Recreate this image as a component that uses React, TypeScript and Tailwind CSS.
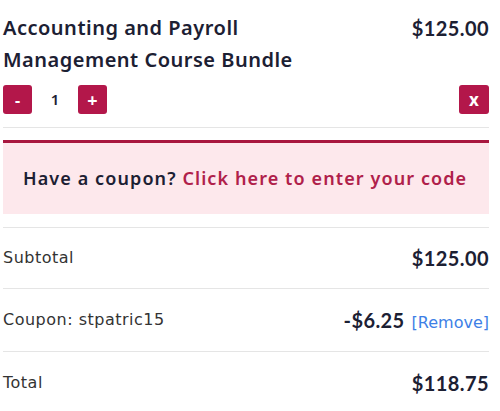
export default function App() {
  return (
    <div className="w-[500px] h-[411px] overflow-hidden bg-white font-['Noto_Sans',sans-serif] text-[#1c2033]">
      <div className="ml-[3px] w-[486px]">
        <div className="pt-[12px] pb-[13px] border-b border-[#e5e5e5]">
          <div className="flex justify-between">
            <h2 className="text-[20px] leading-[32px] font-semibold tracking-[0.5px] w-[320px]">
              Accounting and Payroll Management Course Bundle
            </h2>
            <span className="font-['Lato',sans-serif] font-bold text-[20px] leading-[32px] tracking-[0.4px]">$125.00</span>
          </div>
          <div className="mt-[9px] flex items-center justify-between">
            <div className="flex items-center">
              <button className="w-[29px] h-[29px] rounded-[3px] bg-[#b3174a] text-white font-bold text-[16px] leading-none">-</button>
              <span className="w-[46px] text-center font-semibold text-[15px]">1</span>
              <button className="w-[29px] h-[29px] rounded-[3px] bg-[#b3174a] text-white font-bold text-[18px] leading-none">+</button>
            </div>
            <button className="w-[30px] h-[29px] rounded-[3px] bg-[#b3174a] text-white font-bold text-[17px] leading-none">x</button>
          </div>
        </div>
        <div className="mt-[12px] border-t-[3px] border-[#a8173f] bg-[#fde8ec] h-[74px] flex items-center pl-[20px]">
          <p className="text-[18px] font-semibold tracking-[1.1px]">
            Have a coupon? <a className="text-[#b0204a]" href="#">Click here to enter your code</a>
          </p>
        </div>
        <div className="mt-[13px] border-t border-[#e5e5e5] font-['DejaVu_Sans',sans-serif]">
          <div className="h-[61px] flex items-center justify-between border-b border-[#e5e5e5]">
            <span className="text-[16px] tracking-[0.5px] text-[#333]">Subtotal</span>
            <span className="font-['Lato',sans-serif] font-bold text-[20px] tracking-[0.4px]">$125.00</span>
          </div>
          <div className="h-[63px] flex items-center justify-between border-b border-[#e5e5e5]">
            <span className="text-[16px] tracking-[0.5px] text-[#333]">Coupon: stpatric15</span>
            <span className="flex items-baseline gap-[7px]">
              <span className="font-['Lato',sans-serif] font-bold text-[20px] tracking-[0.4px]">-$6.25</span>
              <a href="#" className="text-[16px] text-[#3d7fe6]">[Remove]</a>
            </span>
          </div>
          <div className="h-[62px] flex items-center justify-between">
            <span className="text-[16px] tracking-[0.5px] text-[#333]">Total</span>
            <span className="font-['Lato',sans-serif] font-bold text-[20px] tracking-[0.4px]">$118.75</span>
          </div>
        </div>
      </div>
    </div>
  );
}
